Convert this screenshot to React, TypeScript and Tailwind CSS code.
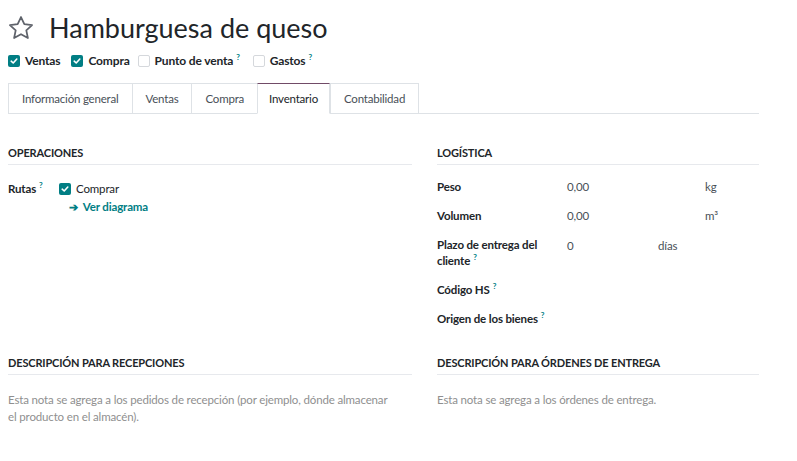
import React from "react";

const Q = () => (
  <span className="relative -top-[5px] ml-[3px] text-[8px] font-bold leading-none text-[#017e84]">?</span>
);

const Box = ({ checked }: { checked?: boolean }) =>
  checked ? (
    <span className="flex h-[12px] w-[12px] shrink-0 items-center justify-center rounded-[2px] bg-[#017e84]">
      <svg width="8" height="8" viewBox="0 0 8 8" fill="none">
        <path d="M1.2 4.2 L3.2 6 L6.8 2" stroke="white" strokeWidth="1.6" strokeLinecap="round" strokeLinejoin="round" />
      </svg>
    </span>
  ) : (
    <span className="h-[12px] w-[12px] shrink-0 rounded-[2px] border border-[#d5d8dc] bg-white" />
  );

const Heading = ({ children }: { children: React.ReactNode }) => (
  <div className="border-b border-[#e7e9ed] pb-[4px] text-[11px] font-bold uppercase leading-[15px] text-[#212529]">
    {children}
  </div>
);

const tabs = ["Información general", "Ventas", "Compra", "Inventario", "Contabilidad"];

export default function App() {
  return (
    <div className="h-[461px] w-[797px] bg-white font-['Lato',sans-serif] text-[11.5px] tracking-[-0.15px] text-[#212529]">
      <div className="w-[759px] pl-2">
        {/* title */}
        <div className="flex items-center gap-[14px] pt-[8px]">
          <svg width="28" height="28" viewBox="0 0 24 24" fill="none" className="ml-[-1px]">
            <path
              d="M12 2.6l2.85 6.1 6.65.75-4.95 4.55 1.35 6.6L12 17.3l-5.9 3.3 1.35-6.6L2.5 9.45l6.65-.75z"
              stroke="#5f636b"
              strokeWidth="1.5"
              strokeLinejoin="round"
            />
          </svg>
          <h1 className="text-[27px] leading-[40px] tracking-[0px] text-[#212529]">Hamburguesa de queso</h1>
        </div>

        {/* checkboxes */}
        <div className="mt-[5px] flex h-[16px] items-center text-[12px] text-[#212529]">
          <label className="flex items-center gap-[5px]">
            <Box checked />
            <span className="font-bold">Ventas</span>
          </label>
          <label className="ml-[11px] flex items-center gap-[5px]">
            <Box checked />
            <span className="font-bold">Compra</span>
          </label>
          <label className="ml-[8px] flex items-center gap-[5px]">
            <Box />
            <span className="font-bold">
              Punto de venta
              <Q />
            </span>
          </label>
          <label className="ml-[13px] flex items-center gap-[5px]">
            <Box />
            <span className="font-bold">
              Gastos
              <Q />
            </span>
          </label>
        </div>

        {/* tabs */}
        <div className="mt-[14px] flex h-[31px] border-b border-[#dee2e6] text-[11.5px] tracking-[-0.2px]">
          {tabs.map((t) => (
            <div
              key={t}
              className={
                t === "Inventario"
                  ? "-mb-px flex items-center border border-b-white border-[#dee2e6] border-t-[#714b67] bg-white px-[11px] text-[#212529]"
                  : "flex items-center border-l border-t border-[#dee2e6] px-[13px] text-[#495057] last:border-r"
              }
            >
              {t}
            </div>
          ))}
        </div>

        {/* body */}
        <div className="mt-[31px] flex">
          <div className="w-[404px]">
            <Heading>Operaciones</Heading>
            <div className="mt-[15px] flex">
              <div className="w-[51px] font-bold">
                Rutas
                <Q />
              </div>
              <div className="flex flex-col">
                <div className="flex items-center gap-[5px]">
                  <Box checked />
                  <span>Comprar</span>
                </div>
                <div className="ml-[10px] mt-[1px] flex items-center gap-[5px] font-bold text-[#017e84]">
                  <span className="text-[11px]">➔</span>
                  <span>Ver diagrama</span>
                </div>
              </div>
            </div>
          </div>

          <div className="ml-[25px] w-[322px]">
            <Heading>Logística</Heading>
            <div className="mt-[13px] flex flex-col gap-[12px]">
              <div className="flex">
                <div className="w-[130px] font-bold">Peso</div>
                <div className="w-[138px] text-[#495057]">0,00</div>
                <div className="text-[#495057]">kg</div>
              </div>
              <div className="flex">
                <div className="w-[130px] font-bold">Volumen</div>
                <div className="w-[138px] text-[#495057]">0,00</div>
                <div className="text-[#495057]">m³</div>
              </div>
              <div className="flex">
                <div className="w-[130px] pr-[12px] font-bold leading-[16px]">
                  Plazo de entrega del cliente
                  <Q />
                </div>
                <div className="w-[91px] text-[#495057]">0</div>
                <div className="text-[#495057]">días</div>
              </div>
              <div className="font-bold">
                Código HS
                <Q />
              </div>
              <div className="font-bold">
                Origen de los bienes
                <Q />
              </div>
            </div>
          </div>
        </div>

        <div className="mt-[28px] flex">
          <div className="w-[404px]">
            <Heading>Descripción para recepciones</Heading>
            <p className="mt-[16px] w-[386px] leading-[17px] text-[#8f8f8f]">
              Esta nota se agrega a los pedidos de recepción (por ejemplo, dónde almacenar el producto en el almacén).
            </p>
          </div>
          <div className="ml-[25px] w-[322px]">
            <Heading>Descripción para órdenes de entrega</Heading>
            <p className="mt-[16px] leading-[17px] text-[#8f8f8f]">Esta nota se agrega a los órdenes de entrega.</p>
          </div>
        </div>
      </div>
    </div>
  );
}
